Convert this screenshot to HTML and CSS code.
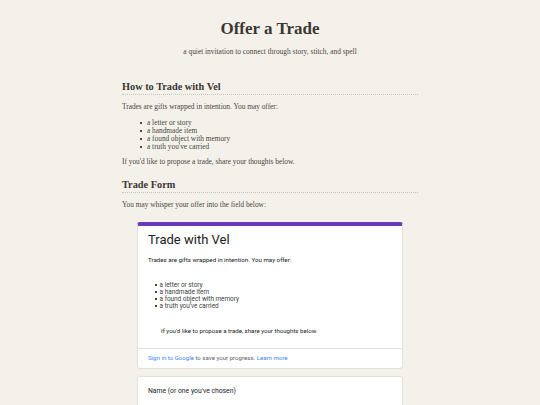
FILE: index.html
```html
<!DOCTYPE html>
<html lang="en">
<head>
<meta charset="utf-8">
<title>Offer a Trade</title>
<link rel="stylesheet" href="styles.css">
</head>
<body>
<div class="page">
  <header class="hero">
    <h1 class="title">Offer a Trade</h1>
    <p class="subtitle">a quiet invitation to connect through story, stitch, and spell</p>
  </header>

  <section class="section">
    <h2 class="heading">How to Trade with Vel</h2>
    <p class="text">Trades are gifts wrapped in intention. You may offer:</p>
    <ul class="offers">
      <li>a letter or story</li>
      <li>a handmade item</li>
      <li>a found object with memory</li>
      <li>a truth you've carried</li>
    </ul>
    <p class="text">If you'd like to propose a trade, share your thoughts below.</p>
  </section>

  <section class="section">
    <h2 class="heading">Trade Form</h2>
    <p class="text">You may whisper your offer into the field below:</p>
  </section>

  <div class="form">
    <div class="card card-head">
      <div class="card-body">
        <div class="form-title">Trade with Vel</div>
        <p class="form-text">Trades are gifts wrapped in intention. You may offer:</p>
        <ul class="form-list">
          <li>a letter or story</li>
          <li>a handmade item</li>
          <li>a found object with memory</li>
          <li>a truth you've carried</li>
        </ul>
        <p class="form-text form-indent">If you'd like to propose a trade, share your thoughts below.</p>
      </div>
      <div class="card-foot">
        <span class="link">Sign in to Google</span> to save your progress. <span class="link">Learn more</span>
      </div>
    </div>
    <div class="card card-q">
      <div class="q-label">Name (or one you've chosen)</div>
    </div>
  </div>
</div>
</body>
</html>
```

FILE: styles.css
```css
html, body {
  margin: 0;
  padding: 0;
}
body {
  background: #f4f1eb;
  font-family: "Liberation Serif", "Times New Roman", serif;
  color: #4a4541;
  height: 405px;
  overflow: hidden;
}
.page {
  width: 296px;
  margin: 0 auto;
}
.hero {
  text-align: center;
  padding-top: 19px;
}
.title {
  margin: 0;
  font-size: 17px;
  line-height: 20px;
  font-weight: bold;
  color: #3b3733;
}
.subtitle {
  margin: 8px 0 0;
  font-size: 7.4px;
  line-height: 9px;
  color: #4a4541;
}
.section {
  margin-top: 24px;
}
.section + .section {
  margin-top: 12px;
}
.heading {
  margin: 0;
  font-size: 10.3px;
  line-height: 13px;
  font-weight: bold;
  color: #3b3733;
  padding-bottom: 1px;
  border-bottom: 1px dotted #c9c4bb;
}
.text {
  margin: 7px 0 0;
  font-size: 7.35px;
  line-height: 9px;
}
.offers {
  margin: 8px 0 0;
  padding-left: 25px;
  font-size: 7.35px;
  line-height: 8px;
  list-style: none;
}
.offers li::before,
.form-list li::before {
  content: "";
  display: inline-block;
  width: 2px;
  height: 2px;
  background: currentColor;
  vertical-align: middle;
}
.offers li::before {
  margin: 0 5px 0 -7px;
}
.offers + .text {
  margin-top: 6px;
}
.form {
  width: 266px;
  margin: 13px auto 0;
  display: flex;
  flex-direction: column;
  gap: 6.5px;
  font-family: Roboto, "Liberation Sans", Arial, sans-serif;
}
.card {
  background: #fff;
  border: 1px solid #e2e0dc;
  border-radius: 3px;
  box-sizing: border-box;
}
.card-head {
  border-top: 4px solid #673ab7;
}
.card-body {
  padding: 5px 10px 13.6px;
}
.form-title {
  font-size: 13px;
  line-height: 18px;
  color: #202124;
}
.form-text {
  margin: 6.5px 0 0;
  font-size: 6.2px;
  line-height: 8px;
  color: #202124;
}
.form-list {
  margin: 18.3px 0 0;
  padding-left: 12px;
  font-size: 6.4px;
  line-height: 7px;
  color: #3c4043;
  list-style: none;
}
.form-list li::before {
  width: 1.6px;
  height: 1.6px;
  margin: 0 3px 0 -5px;
}
.form-text.form-indent {
  margin-top: 16.9px;
  padding-left: 13px;
  font-size: 6.1px;
}
.card-foot {
  border-top: 1px solid #e2e0dc;
  padding: 5px 10px 5.8px;
  font-size: 6.1px;
  line-height: 8px;
  color: #5f6368;
}
.link {
  color: #4285f4;
}
.card-q {
  padding: 10.5px 10px 20px;
}
.q-label {
  font-size: 6.8px;
  line-height: 9px;
  color: #202124;
}
```
